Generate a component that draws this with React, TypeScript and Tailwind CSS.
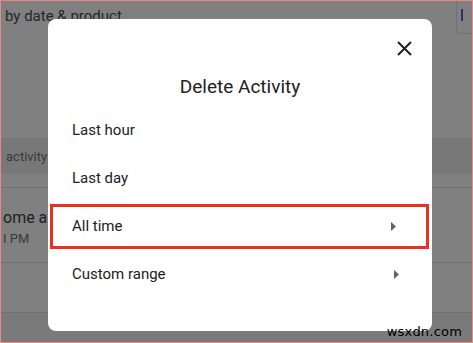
import React from "react";

const font = { fontFamily: "Roboto, 'Open Sans', Arial, sans-serif" };

const options = [
  { label: "Last hour", arrow: false },
  { label: "Last day", arrow: false },
  { label: "All time", arrow: true, highlight: true },
  { label: "Custom range", arrow: true },
];

function Caret() {
  return (
    <svg width="5" height="9" viewBox="0 0 5 9" className="text-[#5f6368]">
      <path d="M0 0 L5 4.5 L0 9 Z" fill="currentColor" />
    </svg>
  );
}

export default function App() {
  return (
    <div
      className="relative w-[473px] h-[343px] overflow-hidden border border-[#e58a8a] bg-[#808080] text-[#262626]"
      style={font}
    >
      {/* page behind the scrim */}
      <div className="flex flex-col h-full">
        <div className="flex h-[33px] justify-between">
          <div className="pl-[4px] pt-[4px] text-[15px]">by date &amp; product</div>
          <div className="w-[16px] h-[33px] rounded-bl-[4px] border-l border-b border-[#727272] pl-[4px] pt-[8px]">
            <div className="w-[2px] h-[12px] bg-[#24336b]" />
          </div>
        </div>
        <div className="h-[104px]" />
        <div className="h-[36px] bg-[#787878] border-t border-[#747474] flex items-center pl-[5px] text-[13px] text-[#3a3a3a]">
          activity
        </div>
        <div className="h-[14px] border-b border-[#727272]" />
        <div className="h-[75px] border-b border-[#707070] pl-[2px] pt-[19px]">
          <div className="text-[16px] leading-[22px] text-[#1e1e1e]">ome a</div>
          <div className="text-[13px] leading-[16px] text-[#3a3a3a] mt-[2px]">I PM</div>
        </div>
        <div className="h-[50px] border-b border-[#707070]" />
        <div className="flex-1 bg-[#7a7a7a]" />
      </div>

      {/* dialog */}
      <div className="absolute left-[47px] top-[18px] w-[384px] h-[312px] bg-white rounded-[8px] flex flex-col">
        <button className="absolute right-[20px] top-[21px] w-[16px] h-[16px] flex items-center justify-center text-[#202124]">
          <svg width="15" height="15" viewBox="0 0 15 15">
            <path d="M1 1 L14 14 M14 1 L1 14" stroke="currentColor" strokeWidth="2" />
          </svg>
        </button>
        <h2 className="mt-[57px] text-center text-[19px] leading-[22px] text-[#202124]">Delete Activity</h2>
        <div className="mt-[8px] flex flex-col">
          {options.map((o) =>
            o.highlight ? (
              <div key={o.label} className="h-[48px] flex items-center pl-[2px] pr-[3px]">
                <div className="flex-1 h-[45px] border-[3px] border-[#e8341c] flex items-center justify-between pl-[19px] pr-[30px] text-[15px] text-[#202124]">
                  <span>{o.label}</span>
                  <Caret />
                </div>
              </div>
            ) : (
              <div
                key={o.label}
                className="h-[48px] flex items-center justify-between pl-[24px] pr-[33px] text-[15px] text-[#202124]"
              >
                <span>{o.label}</span>
                {o.arrow && <Caret />}
              </div>
            )
          )}
        </div>
      </div>

      <div
        className="absolute right-[10px] bottom-[2px] text-[13px] leading-[16px] text-black tracking-[0.2px]"
        style={{ fontFamily: "'DejaVu Sans', sans-serif" }}
      >
        wsxdn.com
      </div>
    </div>
  );
}
